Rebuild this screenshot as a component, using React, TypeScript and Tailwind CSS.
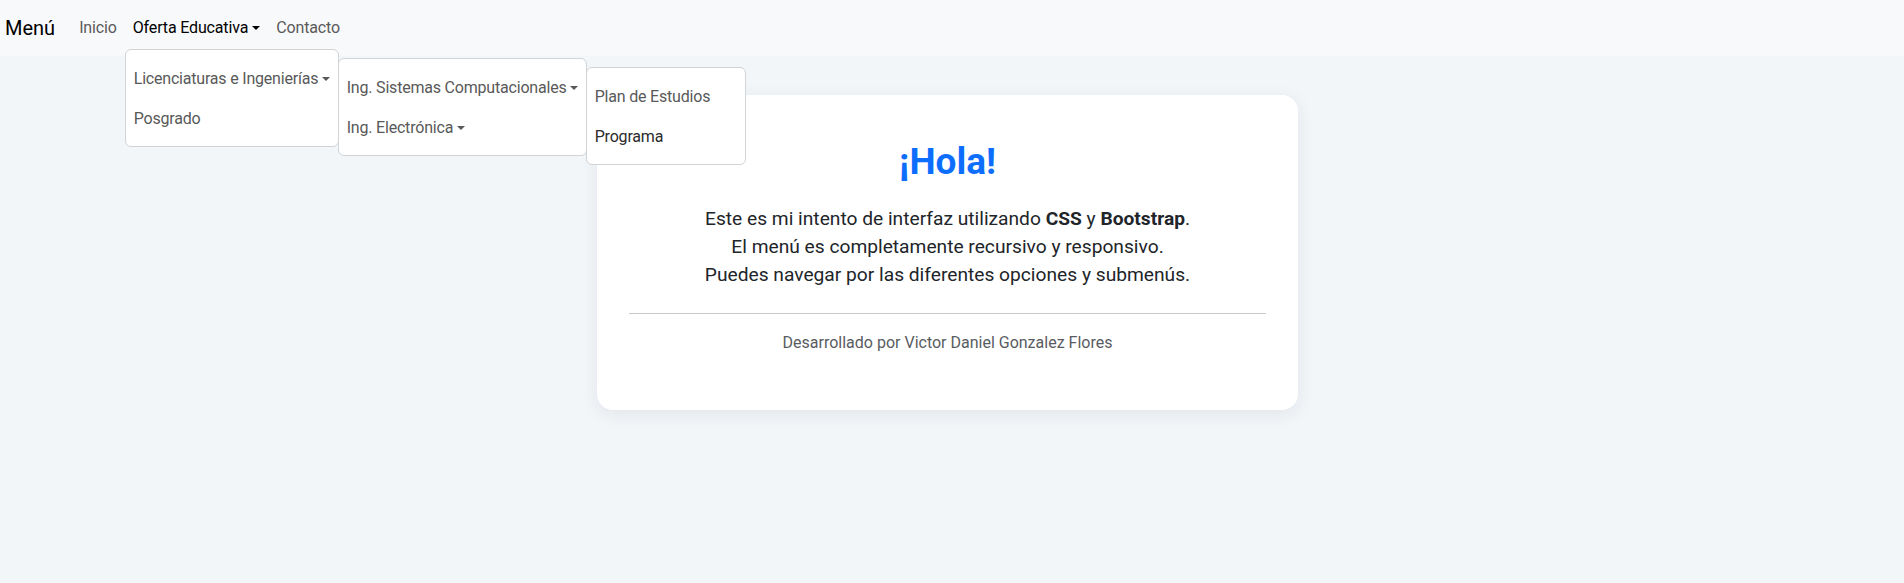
import React from 'react';

// small bootstrap-like caret
const Caret = () => (
  <span className="inline-block w-0 h-0 ml-[4px] align-[3px] border-t-[4px] border-x-[4px] border-t-current border-x-transparent" />
);

const itemCls =
  'relative flex items-center h-10 pt-px px-2 whitespace-nowrap tracking-[-0.2px] text-[#595959] cursor-pointer';

const App: React.FC = () => {
  return (
    <div className="min-h-screen bg-[#f3f6f9] font-['Roboto','Liberation_Sans',sans-serif] text-base text-[#212529]">
      {/* Navbar */}
      <nav className="relative z-20 h-14 bg-[#f8f9fa] flex items-center pl-[5px] py-2">
        <span className="mr-4 text-[20px] leading-[30px] text-black">Menú</span>
        <ul className="flex items-center tracking-[-0.15px]">
          <li>
            <a className="block px-2 py-2 leading-6 text-[#5a5a5b]">Inicio</a>
          </li>
          <li className="relative">
            <a className="block px-2 py-2 leading-6 text-black">
              Oferta Educativa
              <Caret />
            </a>

            {/* level 1 */}
            <ul className="absolute left-0 top-full mt-[1px] w-[214px] py-2 bg-white border border-[#d1d3d5] rounded-[6px]">
              <li className={itemCls}>
                Licenciaturas e Ingenierías
                <Caret />

                {/* level 2 */}
                <ul className="absolute left-full top-0 w-[249px] py-2 bg-white border border-[#d1d3d5] rounded-[6px]">
                  <li className={itemCls}>
                    Ing. Sistemas Computacionales
                    <Caret />

                    {/* level 3 */}
                    <ul className="absolute left-full top-0 w-[160px] py-2 bg-white border border-[#d1d3d5] rounded-[6px]">
                      <li className={itemCls}>Plan de Estudios</li>
                      <li className="relative flex items-center h-10 pt-px px-2 whitespace-nowrap tracking-[-0.2px] text-[#2b2b2b] cursor-pointer">
                        Programa
                      </li>
                    </ul>
                  </li>
                  <li className={itemCls}>
                    Ing. Electrónica
                    <Caret />
                  </li>
                </ul>
              </li>
              <li className={itemCls}>Posgrado</li>
            </ul>
          </li>
          <li>
            <a className="block px-2 py-2 leading-6 text-[#5a5a5b]">Contacto</a>
          </li>
        </ul>
      </nav>

      {/* Main card */}
      <main className="flex justify-center pr-[9px] pt-[39px]">
        <div className="w-[701px] bg-white rounded-2xl shadow-[0_4px_18px_rgba(15,23,42,0.08)] px-8 pt-[45px] pb-[55px] text-center">
          <h1 className="text-[37px] leading-[43px] font-bold text-[#0d6efd]">¡Hola!</h1>
          <p className="mt-[22px] text-[19.2px] leading-[28px] text-[#212529]">
            Este es mi intento de interfaz utilizando <strong>CSS</strong> y{' '}
            <strong>Bootstrap</strong>.
            <br />
            El menú es completamente recursivo y responsivo.
            <br />
            Puedes navegar por las diferentes opciones y submenús.
          </p>
          <hr className="mt-6 border-0 border-t border-[#c8c9ca]" />
          <p className="mt-[17px] text-base leading-6 text-[#595c5f]">
            Desarrollado por Victor Daniel Gonzalez Flores
          </p>
        </div>
      </main>
    </div>
  );
};

export default App;
